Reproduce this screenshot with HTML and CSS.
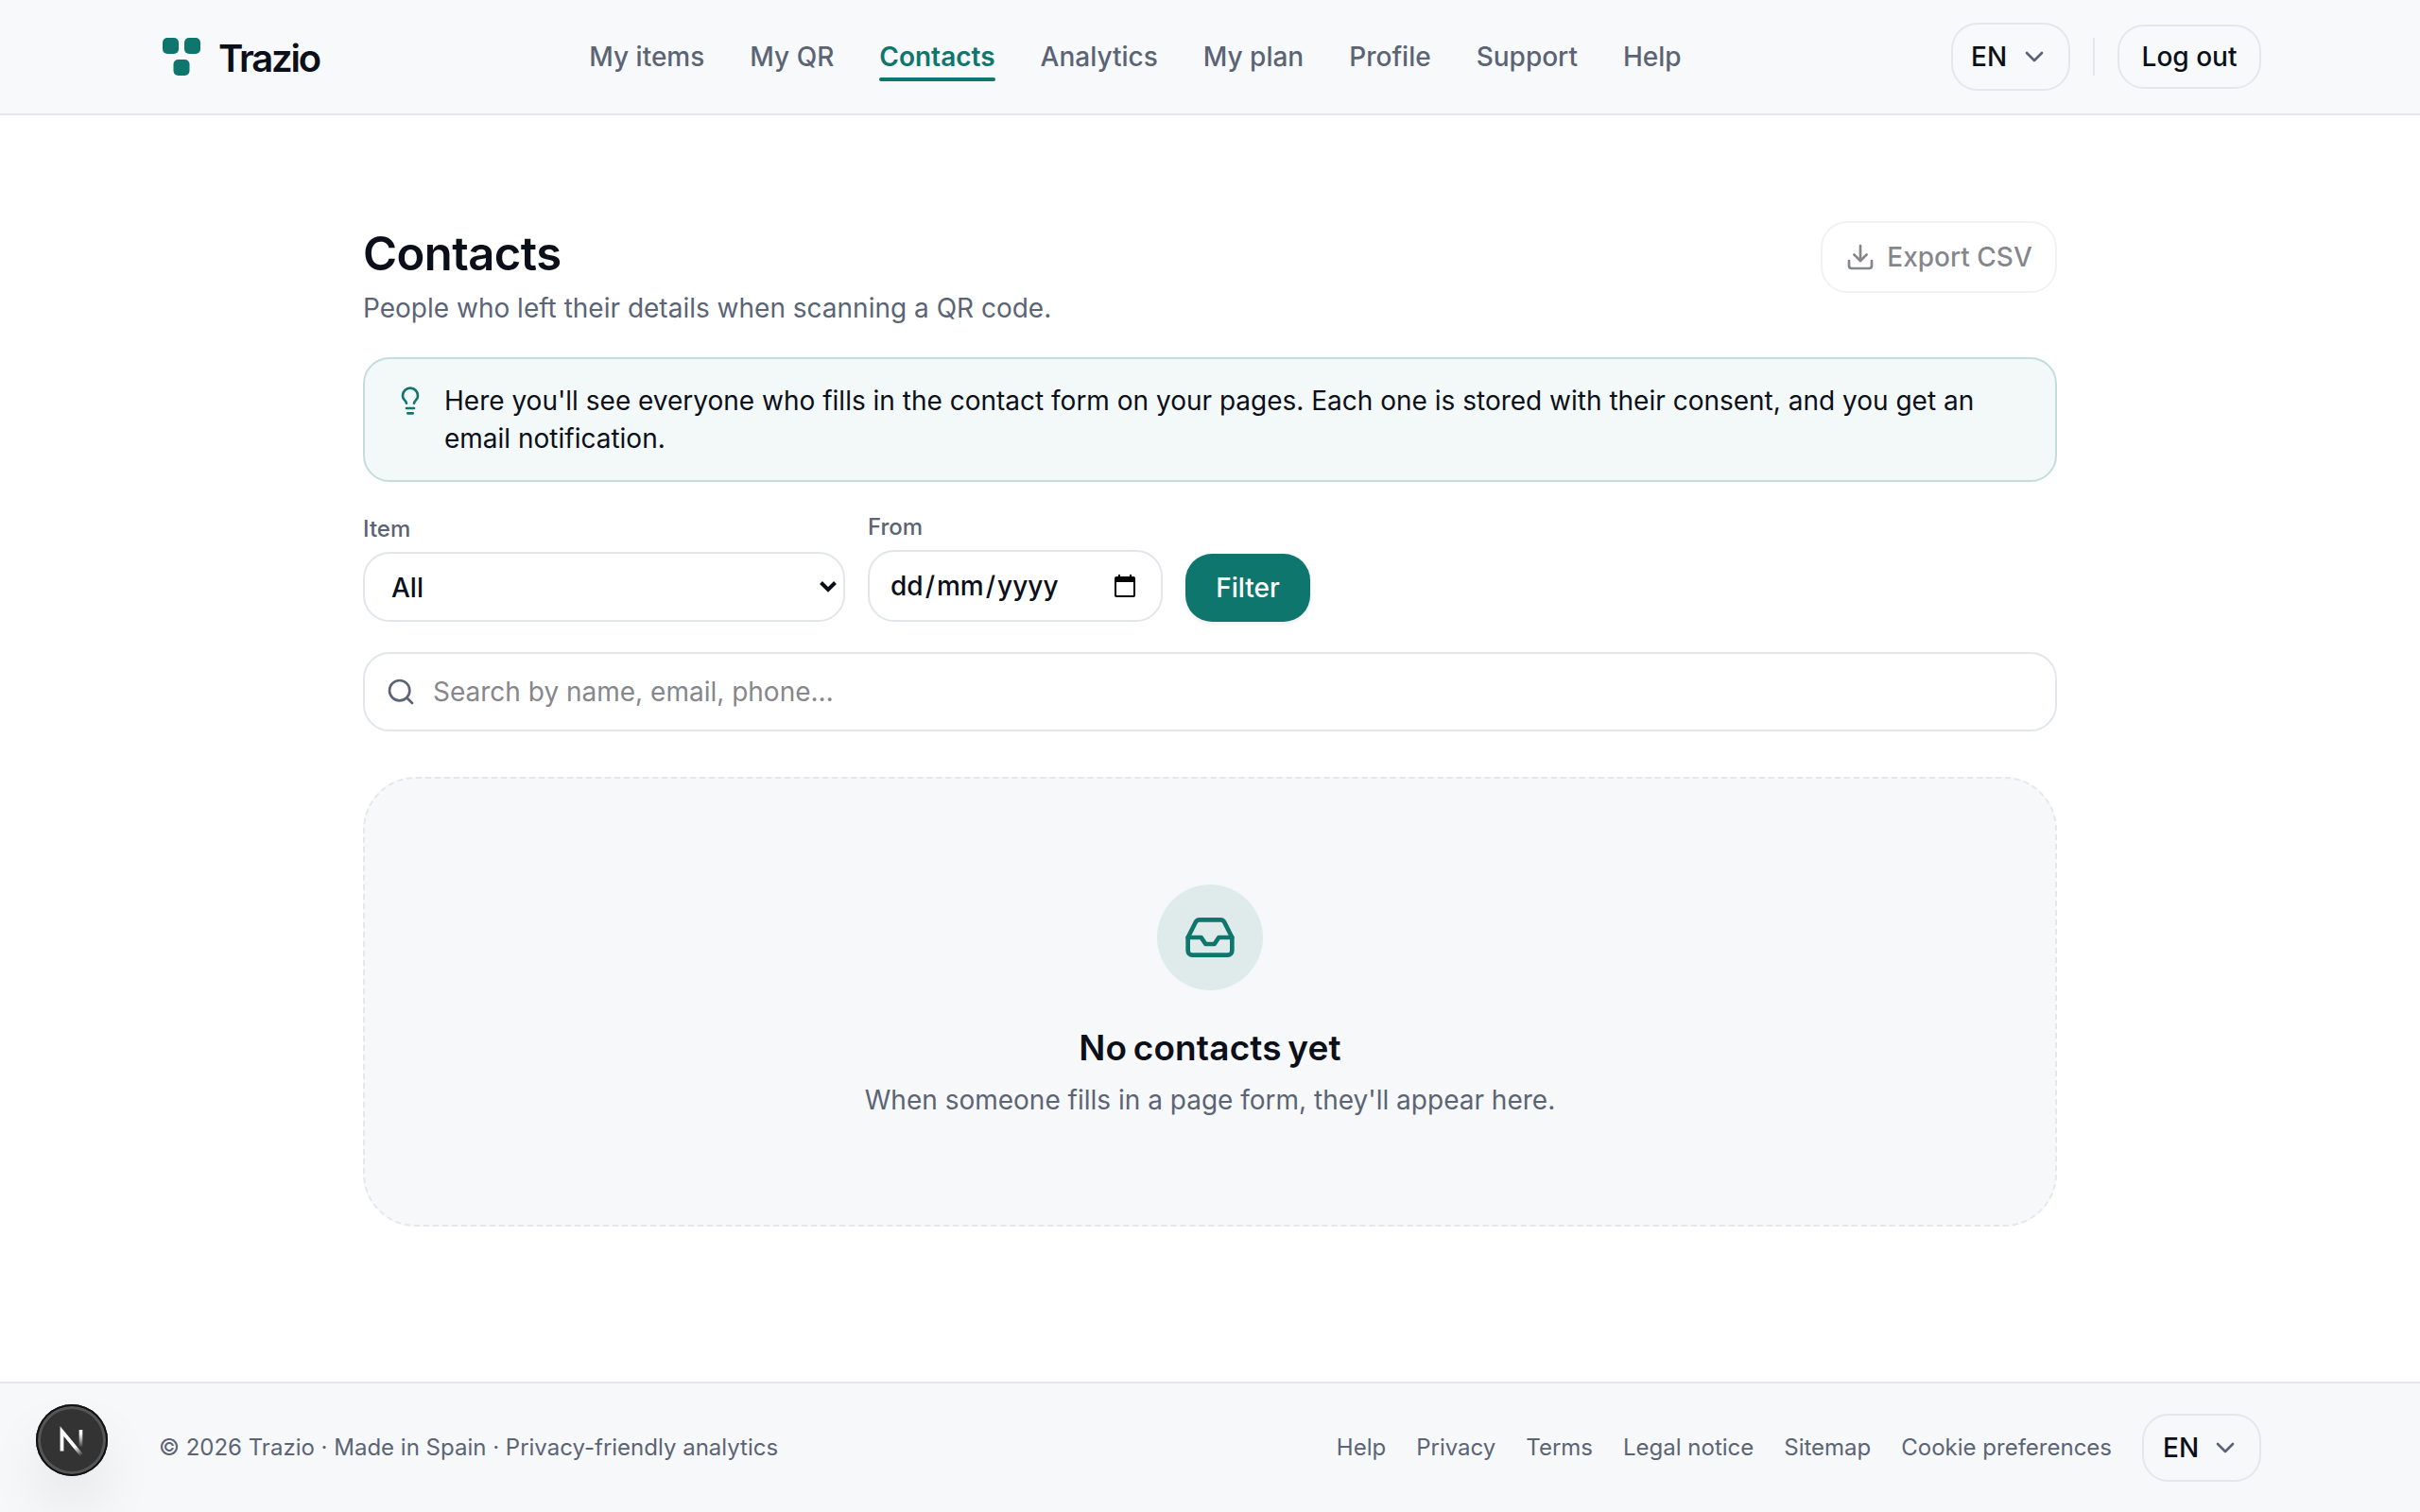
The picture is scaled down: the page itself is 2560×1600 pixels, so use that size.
FILE: index.html
```html
<!DOCTYPE html>
<html lang="en">
<head>
  <meta charset="UTF-8">
  <meta name="viewport" content="width=device-width, initial-scale=1.0">
  <title>Contacts - Trazio</title>
  <link rel="stylesheet" href="styles.css">
</head>
<body>

  <header class="site-header">
    <div class="container header-row">
      <a class="logo">
        <svg class="logo-mark" width="48" height="48" viewBox="0 0 48 48" fill="#0f766e">
          <rect x="4" y="4" width="17" height="17" rx="5" />
          <rect x="27" y="4" width="17" height="17" rx="5" />
          <rect x="15.5" y="27" width="17" height="17" rx="5" />
        </svg>
        <span>Trazio</span>
      </a>

      <nav class="nav">
        <a>My items</a>
        <a>My QR</a>
        <a class="active">Contacts</a>
        <a>Analytics</a>
        <a>My plan</a>
        <a>Profile</a>
        <a>Support</a>
        <a>Help</a>
      </nav>

      <div class="header-actions">
        <button class="lang">EN
          <svg class="icon" width="32" height="32" viewBox="0 0 24 24"><path d="m6 9 6 6 6-6" /></svg>
        </button>
        <span class="divider"></span>
        <button class="logout">Log out</button>
      </div>
    </div>
  </header>

  <main class="main">
    <div class="page-head">
      <div>
        <h1>Contacts</h1>
        <p class="subtitle">People who left their details when scanning a QR code.</p>
      </div>
      <button class="export" disabled>
        <svg class="icon" width="32" height="32" viewBox="0 0 24 24">
          <path d="M12 15V3" />
          <path d="M21 15v4a2 2 0 0 1-2 2H5a2 2 0 0 1-2-2v-4" />
          <path d="m7 10 5 5 5-5" />
        </svg>
        <span>Export CSV</span>
      </button>
    </div>

    <div class="tip">
      <svg class="icon" width="32" height="32" viewBox="0 0 24 24">
        <path d="M15 14c.2-1 .7-1.7 1.5-2.5 1-.9 1.5-2.2 1.5-3.5A6 6 0 0 0 6 8c0 1 .2 2.2 1.5 3.5.7.7 1.3 1.5 1.5 2.5" />
        <path d="M9 18h6" />
        <path d="M10 22h4" />
      </svg>
      <p>Here you'll see everyone who fills in the contact form on your pages. Each one is stored with their consent, and you get an email notification.</p>
    </div>

    <div class="filters">
      <div class="field field-item">
        <span class="label">Item</span>
        <div class="control select">
          <span>All</span>
          <svg width="20" height="14" viewBox="0 0 20 14"><path d="M2.5 2.5 10 10l7.5-7.5" /></svg>
        </div>
      </div>
      <div class="field field-date">
        <span class="label">From</span>
        <div class="control date">
          <span>dd<span class="slash">/</span>mm<span class="slash">/</span>yyyy</span>
          <svg width="22" height="24" viewBox="0 0 22 24">
            <path fill-rule="evenodd" d="M4 0h2v2h10V0h2v2h2a2 2 0 0 1 2 2v18a2 2 0 0 1-2 2H2a2 2 0 0 1-2-2V4a2 2 0 0 1 2-2h2zM2 8v14h18V8z" />
          </svg>
        </div>
      </div>
      <button class="filter-btn">Filter</button>
    </div>

    <div class="search">
      <svg class="icon" width="32" height="32" viewBox="0 0 24 24">
        <circle cx="11" cy="11" r="8" />
        <path d="m21 21-4.34-4.34" />
      </svg>
      <span>Search by name, email, phone…</span>
    </div>

    <section class="empty">
      <div class="empty-icon">
        <svg class="icon" width="56" height="56" viewBox="0 0 24 24">
          <path d="M22 12h-6l-2 3h-4l-2-3H2" />
          <path d="M5.45 5.11 2 12v6a2 2 0 0 0 2 2h16a2 2 0 0 0 2-2v-6l-3.45-6.89A2 2 0 0 0 16.76 4H7.24a2 2 0 0 0-1.79 1.11z" />
        </svg>
      </div>
      <h2>No contacts yet</h2>
      <p>When someone fills in a page form, they'll appear here.</p>
    </section>
  </main>

  <footer class="site-footer">
    <div class="container footer-row">
      <p>© 2026 Trazio · Made in Spain · Privacy-friendly analytics</p>
      <div class="footer-links">
        <a>Help</a>
        <a>Privacy</a>
        <a>Terms</a>
        <a>Legal notice</a>
        <a>Sitemap</a>
        <a>Cookie preferences</a>
        <button class="lang">EN
          <svg class="icon" width="32" height="32" viewBox="0 0 24 24"><path d="m6 9 6 6 6-6" /></svg>
        </button>
      </div>
    </div>
  </footer>

  <div class="dev-badge">
    <svg width="76" height="76" viewBox="0 0 76 76" fill="none">
      <defs>
        <linearGradient id="stem" x1="0" y1="27" x2="0" y2="46" gradientUnits="userSpaceOnUse">
          <stop offset="0.2" stop-color="#fff" />
          <stop offset="1" stop-color="#fff" stop-opacity="0" />
        </linearGradient>
        <linearGradient id="leg" x1="40" y1="42" x2="49" y2="54" gradientUnits="userSpaceOnUse">
          <stop offset="0.2" stop-color="#fff" />
          <stop offset="1" stop-color="#fff" stop-opacity="0" />
        </linearGradient>
      </defs>
      <path d="M27.5 49.5V28.5L48.5 54" stroke="url(#leg)" stroke-width="3.8" />
      <path d="M47.5 27v18" stroke="url(#stem)" stroke-width="3.6" />
    </svg>
  </div>

</body>
</html>
```
FILE: styles.css
```css
* {
  box-sizing: border-box;
}

body {
  margin: 0;
  min-height: 100vh;
  display: flex;
  flex-direction: column;
  font-family: Inter, "Liberation Sans", sans-serif;
  font-size: 28px;
  line-height: 40px;
  color: #0b0f19;
  background: #fff;
}

h1,
h2,
p {
  margin: 0;
}

button {
  font: inherit;
  color: inherit;
  background: none;
  border: 2px solid #e5e7eb;
  border-radius: 28px;
  font-weight: 500;
}

.icon {
  flex: none;
  fill: none;
  stroke: currentColor;
  stroke-width: 2;
  stroke-linecap: round;
  stroke-linejoin: round;
}

.container {
  width: 2304px;
  margin: 0 auto;
  padding: 0 40px;
}

/* header */
.site-header {
  height: 122px;
  background: #f8f9fb;
  border-bottom: 2px solid #e5e7eb;
}

.header-row {
  height: 120px;
  display: flex;
  align-items: center;
  justify-content: space-between;
}

.logo {
  display: flex;
  align-items: center;
  gap: 15px;
  font-size: 40px;
  font-weight: 600;
  letter-spacing: -2.2px;
}

.logo span {
  padding-top: 4px;
}

.nav {
  display: flex;
  gap: 48px;
  font-weight: 500;
  color: #5b6475;
}

.active {
  position: relative;
  color: #0f766e;
  font-weight: 600;
}

.active::after {
  content: "";
  position: absolute;
  left: 0;
  right: 0;
  bottom: -6px;
  height: 4px;
  border-radius: 2px;
  background: #0f766e;
}

.header-actions {
  display: flex;
  align-items: center;
  gap: 24px;
}

.lang {
  width: 126px;
  height: 72px;
  padding: 0 20px 0 19px;
  display: flex;
  align-items: center;
  justify-content: space-between;
}

.lang .icon {
  color: #5b6475;
}

.divider {
  width: 2px;
  height: 40px;
  background: #e5e7eb;
}

.logout {
  width: 152px;
  height: 68px;
  padding: 0;
}

/* content */
.main {
  flex: 1;
  width: 1792px;
  margin: 0 auto;
  padding-top: 112px;
}

.page-head {
  display: flex;
  justify-content: space-between;
  align-items: flex-start;
}

h1 {
  font-size: 49px;
  line-height: 70px;
  font-weight: 600;
  letter-spacing: -0.55px;
}

.subtitle {
  margin-top: 2px;
  color: #5b6475;
}

.export {
  width: 250px;
  height: 76px;
  padding: 0;
  display: flex;
  align-items: center;
  justify-content: center;
  gap: 12px;
  opacity: 0.5;
}

.tip {
  margin-top: 32px;
  padding: 24px 32px;
  display: flex;
  gap: 20px;
  border: 2px solid #c3dddb;
  border-radius: 28px;
  background: #f3f8f8;
}

.tip .icon {
  margin-top: 4px;
  color: #0f766e;
}

.filters {
  margin-top: 32px;
  height: 116px;
  display: flex;
  align-items: flex-end;
  gap: 24px;
}

.field {
  display: flex;
  flex-direction: column;
  gap: 8px;
}

.field-item {
  width: 510px;
}

.field-date {
  width: 312px;
}

.label {
  font-size: 24px;
  line-height: 32px;
  font-weight: 500;
  color: #5b6475;
}

.control {
  display: flex;
  align-items: center;
  justify-content: space-between;
  border: 2px solid #e2e6eb;
  border-radius: 28px;
  font-weight: 500;
}

.select {
  height: 74px;
  padding: 0 6px 0 28px;
}

.select span {
  padding-top: 2px;
}

.select svg {
  fill: none;
  stroke: #0b0f19;
  stroke-width: 4;
}

.date {
  height: 76px;
  padding: 0 27px 0 22px;
}

.slash {
  margin: 0 2px;
}

.filter-btn {
  width: 132px;
  height: 72px;
  padding: 0;
  border: 0;
  color: #fff;
  background: #0f766e;
  box-shadow: 0 2px 4px rgba(0, 0, 0, 0.08);
}

.search {
  margin-top: 32px;
  height: 84px;
  padding: 0 22px;
  display: flex;
  align-items: center;
  gap: 18px;
  border: 2px solid #e2e6eb;
  border-radius: 28px;
  color: #85878c;
}

.search .icon {
  color: #5b6475;
}

.empty {
  margin-top: 48px;
  height: 476px;
  padding-top: 112px;
  display: flex;
  flex-direction: column;
  align-items: center;
  border: 2px dashed #e5e7eb;
  border-radius: 56px;
  background: #f7f8fa;
}

.empty-icon {
  width: 112px;
  height: 112px;
  display: flex;
  align-items: center;
  justify-content: center;
  border-radius: 50%;
  color: #0f766e;
  background: #dfebea;
}

h2 {
  margin-top: 33px;
  font-size: 37px;
  line-height: 56px;
  font-weight: 600;
  letter-spacing: 0.15px;
  word-spacing: -3px;
}

.empty p {
  margin-top: 7px;
  color: #5b6475;
}

/* footer */
.site-footer {
  height: 138px;
  border-top: 2px solid #e5e7eb;
  background: #f7f8fa;
  font-size: 24px;
  color: #5b6475;
}

.footer-row {
  height: 136px;
  display: flex;
  align-items: center;
  justify-content: space-between;
}

.footer-links {
  display: flex;
  align-items: center;
  gap: 32px;
}

.footer-links .lang {
  padding-left: 20px;
  font-size: 28px;
  color: #0b0f19;
}

.dev-badge {
  position: fixed;
  left: 38px;
  bottom: 38px;
  width: 76px;
  height: 76px;
  border-radius: 50%;
  background: #333;
  box-shadow: inset 0 0 0 2px #111, inset 0 0 0 5px #555, 0 32px 64px -8px rgba(0, 0, 0, 0.12);
}
```
